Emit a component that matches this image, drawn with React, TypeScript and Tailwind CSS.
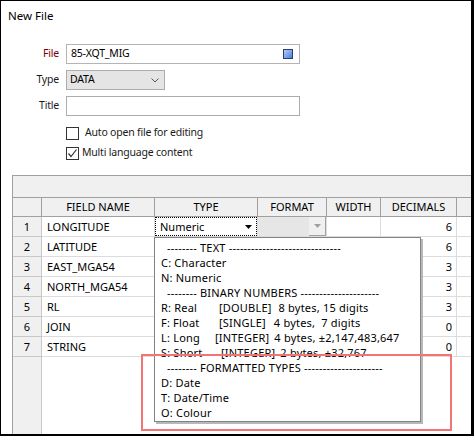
import React from "react";

const rows = [
  { n: 1, name: "LONGITUDE", dec: "6" },
  { n: 2, name: "LATITUDE", dec: "6" },
  { n: 3, name: "EAST_MGA54", dec: "3" },
  { n: 4, name: "NORTH_MGA54", dec: "3" },
  { n: 5, name: "RL", dec: "3" },
  { n: 6, name: "JOIN", dec: "0" },
  { n: 7, name: "STRING", dec: "0" },
];

function Tri({ color = "#000" }: { color?: string }) {
  return (
    <svg width="7" height="4" viewBox="0 0 7 4">
      <polygon points="0,0 7,0 3.5,4" fill={color} />
    </svg>
  );
}

// dropdown list of field types, drawn over the grid
function TypeList() {
  const item = "h-[15px] leading-[15px] pl-[6px] whitespace-pre";
  const head = "h-[15px] leading-[15px] pl-[12px] whitespace-pre";
  return (
    <div className="absolute left-[153px] top-[236px] w-[267px] h-[185px] border border-[#828282] bg-white pt-[2px] shadow-[2px_2px_0_#b8b8b8] text-black text-[11px] tracking-[0.2px]">
      <div className={head}>-------- TEXT ------------------------------</div>
      <div className={item}>C: Character</div>
      <div className={item}>N: Numeric</div>
      <div className={head}>-------- BINARY NUMBERS ---------------------</div>
      <div className={`${item} flex`}>
        <span className="w-[58px]">R: Real</span>
        <span className="mr-[7px]">[DOUBLE]</span>
        <span>8 bytes, 15 digits</span>
      </div>
      <div className={`${item} flex`}>
        <span className="w-[58px]">F: Float</span>
        <span className="mr-[8px]">[SINGLE]</span>
        <span>4 bytes,  7 digits</span>
      </div>
      <div className={`${item} flex`}>
        <span className="w-[54px]">L: Long</span>
        <span className="mr-[5px]">[INTEGER]</span>
        <span>4 bytes, ±2,147,483,647</span>
      </div>
      <div className={`${item} flex`}>
        <span className="w-[60px]">S: Short</span>
        <span className="mr-[5px]">[INTEGER]</span>
        <span>2 bytes, ±32,767</span>
      </div>
      <div className={head}>-------- FORMATTED TYPES ---------------------</div>
      <div className={item}>D: Date</div>
      <div className={item}>T: Date/Time</div>
      <div className={item}>O: Colour</div>
    </div>
  );
}

export default function App() {
  return (
    <div className="relative w-[474px] h-[436px] overflow-hidden bg-white border-l border-t border-r-[3px] border-b-2 border-black flex flex-col text-[11px] text-[#1a1a1a] font-['Noto_Sans','Open_Sans',sans-serif]">
      {/* Title */}
      <div className="h-[43px] pl-[7px] pt-[7px] leading-[16px] text-[11.5px] text-black">New File</div>

      {/* Form */}
      <div className="flex flex-col text-[10.5px] tracking-[-0.2px]">
        <div className="flex items-center h-[20px] gap-[7px]">
          <label className="w-[58px] text-right text-[#800000]">File</label>
          <div className="w-[234px] h-[20px] border border-[#b4b4b4] bg-white flex items-center pl-[4px] pr-[6px]">
            <span className="flex-1 text-black">85-XQT_MIG</span>
            <span className="w-[10px] h-[10px] border border-[#2c3e6a] bg-gradient-to-br from-[#b4cdf7] to-[#4a7fe0]" />
          </div>
        </div>
        <div className="flex items-center h-[20px] gap-[7px] mt-[6px]">
          <label className="w-[58px] text-right">Type</label>
          <div className="w-[99px] h-[20px] border border-[#acacac] bg-[#e5e5e5] flex items-center pl-[3px] pr-[5px]">
            <span className="flex-1 text-black">DATA</span>
            <svg width="8" height="5" viewBox="0 0 8 5">
              <polyline points="0.5,0.5 4,4 7.5,0.5" fill="none" stroke="#555" strokeWidth="1" />
            </svg>
          </div>
        </div>
        <div className="flex items-center h-[20px] gap-[7px] mt-[6px]">
          <label className="w-[58px] text-right">Title</label>
          <div className="w-[234px] h-[20px] border border-[#acacac] bg-white" />
        </div>
        <div className="flex items-center h-[20px] mt-[7px] pl-[65px]">
          <span className="w-[13px] h-[13px] border border-[#333] bg-white" />
          <span className="ml-[6px]">Auto open file for editing</span>
        </div>
        <div className="flex items-center h-[20px] pl-[65px]">
          <span className="w-[13px] h-[13px] border border-[#333] bg-white flex items-center justify-center">
            <svg width="11" height="11" viewBox="0 0 11 11">
              <polyline points="1.5,5.5 4,8.5 9.5,1.5" fill="none" stroke="#333" strokeWidth="1.2" />
            </svg>
          </span>
          <span className="ml-[3px]">Multi language content</span>
        </div>
      </div>

      {/* Grid */}
      <div className="mt-[12px] ml-[11px] flex-1 flex flex-col border-l border-t border-[#a0a0a0] text-black">
        <div className="h-[21px] bg-[#f0f0f0]" />
        <div className="flex h-[20px] bg-[#f0f0f0] border-y border-[#a0a0a0] leading-[18px]">
          <div className="w-[29px] border-r border-[#a0a0a0]" />
          <div className="w-[113px] border-r border-[#a0a0a0] text-center">FIELD NAME</div>
          <div className="w-[103px] border-r border-[#a0a0a0] text-center">TYPE</div>
          <div className="w-[69px] border-r border-[#a0a0a0] text-center">FORMAT</div>
          <div className="w-[54px] border-r border-[#a0a0a0] text-center">WIDTH</div>
          <div className="w-[76px] border-r border-[#a0a0a0] text-center">DECIMALS</div>
          <div className="flex-1" />
        </div>
        {rows.map((r) => (
          <div key={r.n} className="flex h-[20px] leading-[19px] border-b border-[#dcdcdc]">
            <div className="w-[29px] -mb-px border-b border-r border-[#c8c8c8] bg-[#f0f0f0] text-center">{r.n}</div>
            <div className="w-[113px] border-r border-[#dcdcdc] pl-[5px]">{r.name}</div>
            {r.n === 1 ? (
              <>
                <div className="w-[103px] border-r border-[#dcdcdc] flex">
                  <div className="flex-1 flex items-center border border-dotted border-black pl-[4px]">
                    <span className="flex-1">Numeric</span>
                    <span className="w-[16px] flex items-center justify-center">
                      <Tri />
                    </span>
                  </div>
                </div>
                <div className="w-[69px] border-r border-[#dcdcdc] flex">
                  <div className="flex-1 bg-[#e6e6e6]" />
                  <div className="w-[17px] bg-[#f0f0f0] border-r border-b border-[#a0a0a0] flex items-center justify-center">
                    <Tri color="#a0a0a0" />
                  </div>
                </div>
              </>
            ) : (
              <>
                <div className="w-[103px] border-r border-[#dcdcdc]" />
                <div className="w-[69px] border-r border-[#dcdcdc]" />
              </>
            )}
            <div className="w-[54px] border-r border-[#dcdcdc]" />
            <div className="w-[76px] border-r border-[#dcdcdc] text-right pr-[4px]">{r.dec}</div>
            <div className="flex-1" />
          </div>
        ))}
        <div className="flex-1 flex">
          <div className="w-[29px] border-r border-[#c8c8c8] bg-[#f0f0f0]" />
        </div>
      </div>

      <TypeList />

      {/* annotation */}
      <div className="absolute left-[140px] top-[353px] w-[311px] h-[77px] border-2 border-[#f27474] pointer-events-none" />
    </div>
  );
}
